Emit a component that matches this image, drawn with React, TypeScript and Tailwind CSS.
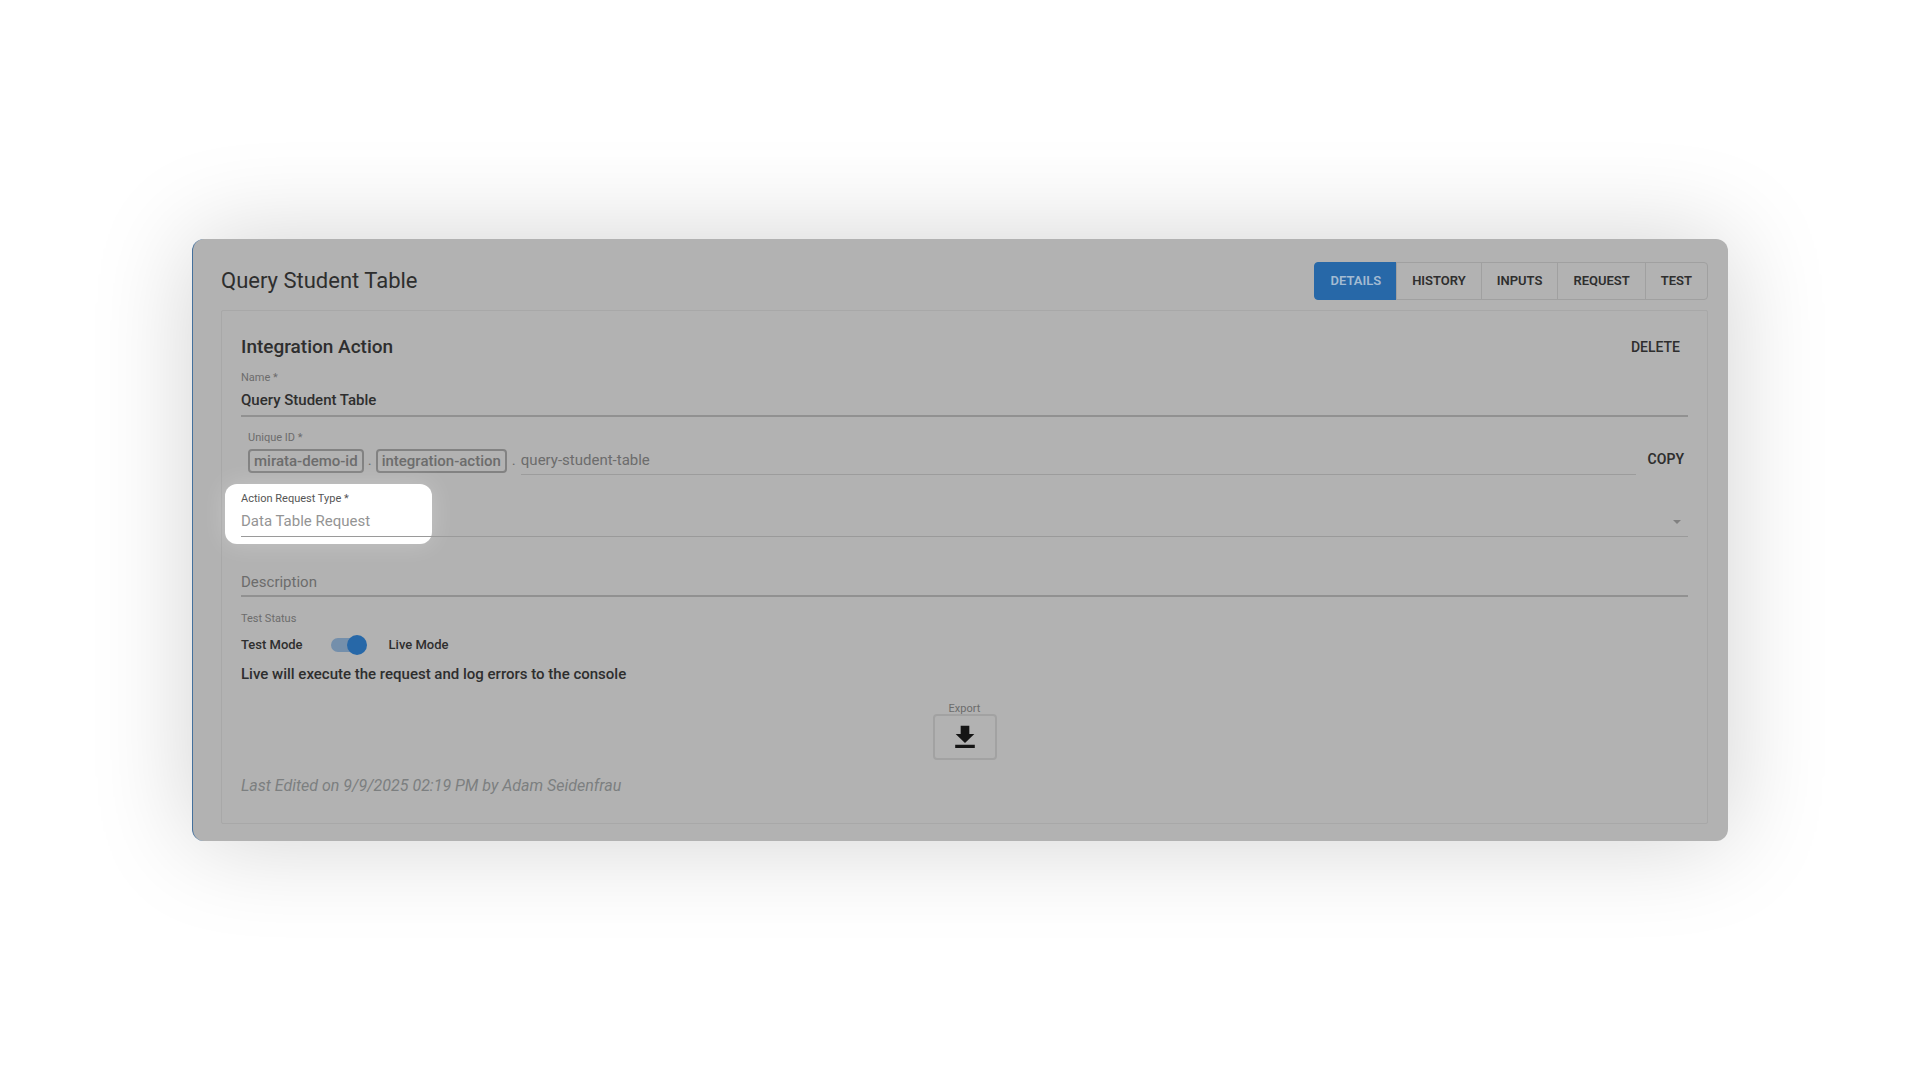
import { useState } from 'react';
import type { ReactNode } from 'react';
import clsx from 'clsx';

const TABS = ['Details', 'History', 'Inputs', 'Request', 'Test'];

function FieldLabel({ htmlFor, children, className }: { htmlFor: string; children: ReactNode; className?: string }) {
  return (
    <label htmlFor={htmlFor} className={clsx('block text-[11px] leading-[22px]', className ?? 'text-[#6c6c6c]')}>
      {children}
    </label>
  );
}

function DownloadIcon() {
  return (
    <svg className="size-7" viewBox="0 0 24 24" fill="currentColor" aria-hidden="true">
      <path d="M8.300 2.400h7.400v7H20l-8 7.800-8-7.800h4.300zM3.600 18.700h16.800v2.700H3.600z" />
    </svg>
  );
}

export default function App() {
  const [activeTab, setActiveTab] = useState('Details');
  const [name, setName] = useState('Query Student Table');
  const [description, setDescription] = useState('');
  const [isLive, setIsLive] = useState(true);

  return (
    <main className="flex min-h-screen items-center bg-white px-[10%] font-['Roboto',sans-serif] text-[#2e2e2e]">
      <section className="w-full rounded-xl border-l border-[#44709c] bg-[#b2b2b2] pt-[23px] pr-5 pb-[17px] pl-7 shadow-[0_0_100px_rgba(0,0,0,0.18)]">
        {/* Header */}
        <header className="flex items-center justify-between">
          <h1 className="text-[22px] leading-[38px]">{name}</h1>
          <nav className="flex h-[38px]">
            {TABS.map((tab) => (
              <button
                key={tab}
                type="button"
                onClick={() => setActiveTab(tab)}
                className={clsx(
                  '-ml-px border px-[15px] text-[13px] font-semibold uppercase first:rounded-l last:rounded-r',
                  activeTab === tab ? 'border-[#2768a8] bg-[#2768a8] text-[#a3bbd2]' : 'border-[#a0a0a0]'
                )}
              >
                {tab}
              </button>
            ))}
          </nav>
        </header>

        {/* Details card */}
        <div className="mt-[10px] rounded-xs border border-[#a8a8a8] px-[19px] pt-4 pb-[26px]">
          <div className="flex h-10 items-center justify-between">
            <h2 className="text-[19px] font-medium">Integration Action</h2>
            <button type="button" className="px-2 text-[14px] font-medium uppercase">
              Delete
            </button>
          </div>

          <FieldLabel htmlFor="name">Name *</FieldLabel>
          <input
            id="name"
            value={name}
            onChange={(e) => setName(e.target.value)}
            className="block h-7 w-full border-b-2 border-[#919191] pb-1 text-[15px] font-medium outline-none"
          />

          {/* Unique ID */}
          <div className="mt-[10px] flex items-end pl-[7px]">
            <div className="grow">
              <FieldLabel htmlFor="unique-id">Unique ID *</FieldLabel>
              <div className="flex h-[26px] items-start text-[15px] text-[#6c6c6c]">
                <span className="rounded border-2 border-[#828282] px-1 leading-5 font-medium">mirata-demo-id</span>
                <span className="w-3 text-center">.</span>
                <span className="rounded border-2 border-[#828282] px-1 leading-5 font-medium">integration-action</span>
                <span className="w-[14px] text-center">.</span>
                <input
                  id="unique-id"
                  value="query-student-table"
                  disabled
                  className="h-[26px] grow border-b border-[#9c9c9c] pb-1"
                />
              </div>
            </div>
            <button type="button" className="ml-2 px-1 text-[14px] leading-8 font-semibold uppercase">
              Copy
            </button>
          </div>

          {/* Request type, spotlighted */}
          <div className="relative mt-[13px]">
            <div className="absolute -top-1 -left-4 h-[60px] w-[207px] rounded-xl bg-white shadow-[0_0_24px_rgba(255,255,255,0.25)]" />
            <div className="relative">
              <FieldLabel htmlFor="request-type" className="text-[#555555]">
                Action Request Type *
              </FieldLabel>
              <select
                id="request-type"
                disabled
                className="block h-[27px] w-full appearance-none border-b border-[#9a9a9a] pb-1 text-[15px] text-[#949494] opacity-100"
              >
                <option>Data Table Request</option>
              </select>
              <svg className="absolute right-[7px] bottom-[13px] h-1 w-2 text-[#808080]" viewBox="0 0 8 4" fill="currentColor">
                <path d="M0 0h8L4 4z" />
              </svg>
            </div>
          </div>

          <input
            aria-label="Description"
            placeholder="Description"
            value={description}
            onChange={(e) => setDescription(e.target.value)}
            className="mt-8 block h-7 w-full border-b-2 border-[#919191] text-[15px] outline-none placeholder:text-[#6c6c6c]"
          />

          {/* Test status */}
          <div className="mt-[11px]">
            <FieldLabel htmlFor="test-status">Test Status</FieldLabel>
            <div className="flex h-[30px] items-center text-[13px] font-medium">
              <span>Test Mode</span>
              <label className="relative mr-[22px] ml-7 flex h-5 w-9 cursor-pointer items-center">
                <input
                  id="test-status"
                  type="checkbox"
                  role="switch"
                  checked={isLive}
                  onChange={(e) => setIsLive(e.target.checked)}
                  className="peer sr-only"
                />
                <span className="h-[14px] w-8 rounded-full bg-[#8b8b8b] peer-checked:bg-[#748fab]" />
                <span className="absolute left-0 size-5 rounded-full bg-[#dddddd] peer-checked:left-4 peer-checked:bg-[#2768a8]" />
              </label>
              <span>Live Mode</span>
            </div>
            <p className="text-[15px] leading-7 font-medium">
              {isLive
                ? 'Live will execute the request and log errors to the console'
                : 'Test will return the sample response'}
            </p>
          </div>

          {/* Export */}
          <div className="mt-[13px] flex flex-col items-center">
            <label htmlFor="export" className="text-[11px] leading-4 text-[#6c6c6c]">
              Export
            </label>
            <button
              id="export"
              type="button"
              className="-mt-[3px] flex h-[46px] w-16 items-center justify-center rounded border-2 border-[#a2a2a2] text-[#151515]"
            >
              <DownloadIcon />
            </button>
          </div>

          <p className="mt-[15px] text-[16px] leading-[22px] text-[#7c7f80] italic">
            Last Edited on 9/9/2025 02:19 PM by Adam Seidenfrau
          </p>
        </div>
      </section>
    </main>
  );
}
